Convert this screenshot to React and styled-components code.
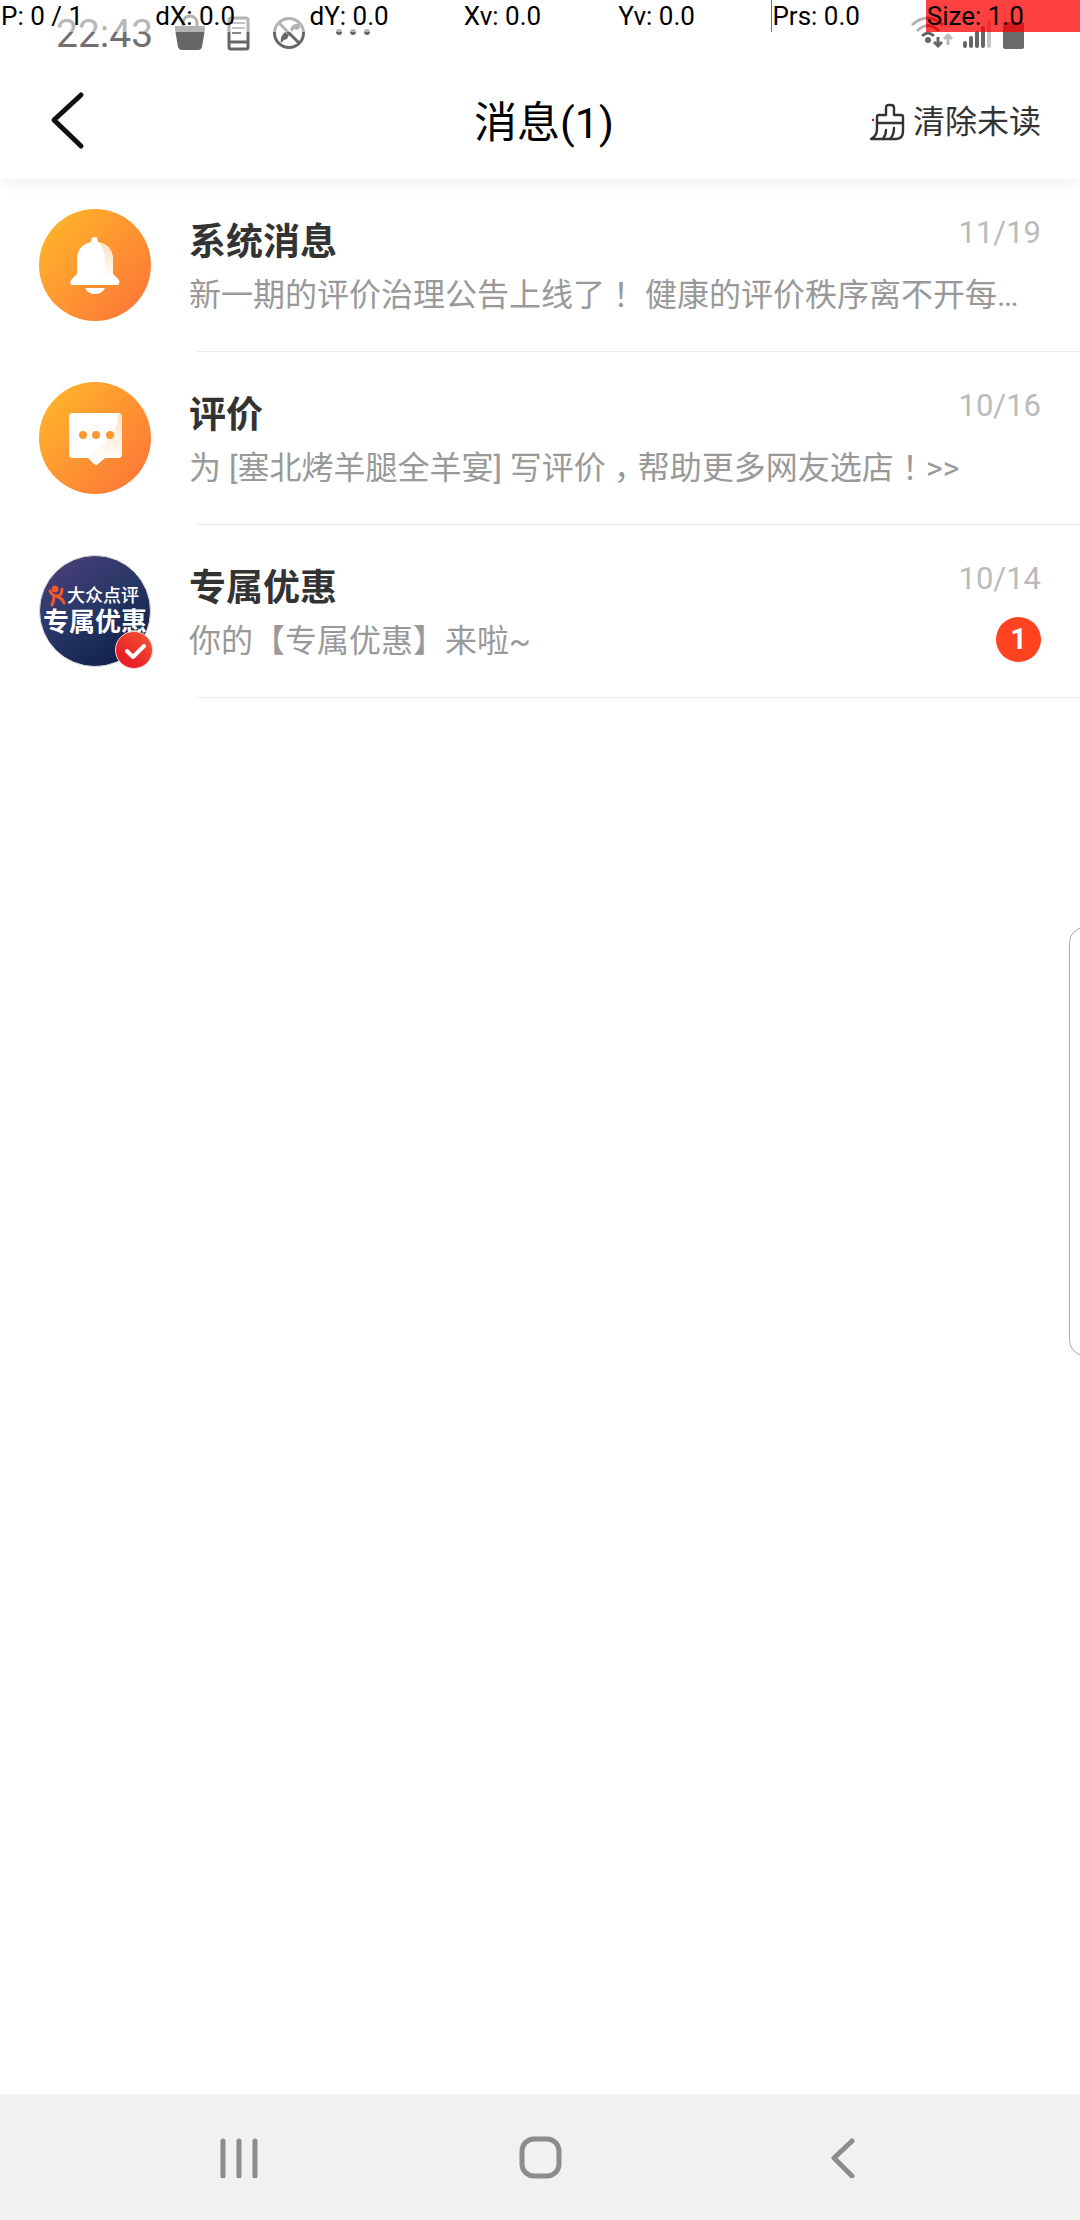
import React from "react";
import styled, { createGlobalStyle } from "styled-components";

const GlobalStyle = createGlobalStyle`
  * { box-sizing: border-box; }
  body {
    margin: 0;
    background: #fff;
    font-family: Roboto, "Noto Sans CJK SC", sans-serif;
  }
  button { font: inherit; color: inherit; background: none; border: 0; padding: 0; cursor: pointer; }
  svg { display: block; }
`;

const Screen = styled.div`
  position: relative;
  min-height: 100vh;
  display: flex;
  flex-direction: column;
  overflow: hidden;
`;

const StatusBar = styled.div`
  height: 64px;
  padding: 3px 56px 0 56px;
  display: flex;
  justify-content: space-between;
  align-items: center;
  color: #707070;
`;

const StatusGroup = styled.div`
  display: flex;
  align-items: center;
`;

const Clock = styled.time`
  width: 118px;
  font-size: 39px;
  line-height: 44px;
`;

const PointerOverlay = styled.div`
  position: absolute;
  z-index: 5;
  top: 0;
  left: 0;
  right: 0;
  height: 32px;
  display: grid;
  grid-template-columns: repeat(7, 1fr);
`;

const PointerCell = styled.span`
  height: 32px;
  font-size: 26px;
  line-height: 32px;
  color: #000;
  white-space: nowrap;
  background: ${(p) => (p.$full ? "rgba(255, 0, 0, 0.75)" : "rgba(255, 255, 255, 0.5)")};
  border-left: 1px solid ${(p) => (p.$marked ? "#f04040" : "transparent")};
`;

const Header = styled.header`
  height: 115px;
  padding: 0 39px 0 47px;
  display: grid;
  grid-template-columns: 1fr auto 1fr;
  align-items: center;
  background: #fff;
  box-shadow: 0 8px 12px -2px rgba(0, 0, 0, 0.05);
`;

const BackButton = styled.button`
  justify-self: start;
  width: 48px;
  height: 72px;
`;

const Title = styled.h1`
  margin: 0;
  padding-top: 2px;
  font-size: 43px;
  line-height: 60px;
  font-weight: 400;
  color: #000;
`;

const ClearButton = styled.button`
  justify-self: end;
  display: flex;
  align-items: center;
  gap: 8px;
  && { font-size: 32px; line-height: 48px; color: #333; }
`;

const List = styled.ul`
  flex: 1;
  margin: 0;
  padding: 0;
  list-style: none;
`;

const Row = styled.li`
  display: flex;
  gap: 38px;
  padding-left: 39px;
`;

const Avatar = styled.div`
  flex: none;
  width: 112px;
  height: 112px;
  margin-top: 30px;
`;

const Content = styled.div`
  flex: 1;
  min-width: 0;
  height: 173px;
  padding: 32px 39px 0 0;
  background: linear-gradient(#ebebeb, #ebebeb) 8px 100% / 100% 1px no-repeat;
`;

const Line = styled.div`
  display: flex;
  justify-content: space-between;
  align-items: flex-start;
`;

const Name = styled.h2`
  margin: 0;
  padding-top: 4px;
  font-size: 37px;
  line-height: 56px;
  font-weight: 700;
  color: #333;
`;

const DateText = styled.time`
  font-size: 31px;
  line-height: 44px;
  color: #bbb;
`;

const Preview = styled.p`
  margin: 0;
  font-size: 32px;
  line-height: 48px;
  color: #999;
  white-space: nowrap;
`;

const Exclamation = styled.span`
  font-family: "Noto Sans CJK TC", sans-serif;
  line-height: 1;
`;

const Comma = styled.span`
  display: inline-block;
  width: 1em;
  line-height: 1;
  text-indent: 8px;
`;

const Unread = styled.span`
  width: 45px;
  height: 45px;
  border-radius: 50%;
  background: #ff4220;
  color: #fff;
  font-size: 29px;
  line-height: 45px;
  font-weight: 700;
  text-align: center;
`;

const EdgePanel = styled.div`
  position: absolute;
  top: 927px;
  right: -20px;
  width: 31px;
  height: 429px;
  border: 1px solid #aaa;
  border-radius: 16px;
`;

const NavBar = styled.nav`
  height: 126px;
  padding: 0 88px;
  display: grid;
  grid-template-columns: repeat(3, 1fr);
  background: #f1f1f1;
`;

const NavButton = styled.button`
  display: flex;
  align-items: center;
  justify-content: center;
`;

function StatusIcons() {
  return (
    <svg width="200" height="40" viewBox="0 0 200 40" fill="none" aria-hidden="true">
      <path d="M1 12h30v3l-3 18q-1 3-4 3H8q-3 0-4-3L1 15z" fill="#666" />
      <path d="M9 12V9a7 7 0 0 1 14 0v3" stroke="#666" strokeWidth="3" />
      <rect x="55" y="4" width="19" height="31" rx="2" stroke="#666" strokeWidth="3" />
      <path d="M58 9h13M58 14h13M58 19h9" stroke="#888" strokeWidth="2" />
      <path d="M55 28h19" stroke="#666" strokeWidth="3" />
      <circle cx="115" cy="19" r="14.5" stroke="#666" strokeWidth="3" />
      <path d="M105 9l20 20" stroke="#666" strokeWidth="3" />
      <path d="M107 29c-1-5 1-8 4-11l4 3-2 4-3 1zM116 15c2-4 5-6 9-5l1 4-3 2-3-1-2 3z" fill="#666" />
      <circle cx="165" cy="18" r="3" fill="#666" />
      <circle cx="179" cy="18" r="3" fill="#666" />
      <circle cx="193" cy="18" r="3" fill="#666" />
    </svg>
  );
}

function SignalIcons() {
  return (
    <svg width="114" height="40" viewBox="0 0 114 40" fill="none" aria-hidden="true">
      <path d="M2 11Q17-3 33 11" stroke="#666" strokeWidth="3" />
      <path d="M7 17Q18 6 29 17" stroke="#666" strokeWidth="3" />
      <path d="M12 22Q18 16 24 22" stroke="#666" strokeWidth="3" />
      <circle cx="18" cy="26" r="3" fill="#666" />
      <path d="M28 23v9M24 28l4 4 4-4" stroke="#666" strokeWidth="3" />
      <path d="M38 31V21M34 25l4-4 4 4" stroke="#bbb" strokeWidth="3" />
      <path d="M55 32v-3M61 32v-8M67 32V19M73 32V14" stroke="#666" strokeWidth="4" strokeLinecap="round" />
      <path d="M79 32V8" stroke="#c4c4c4" strokeWidth="4" strokeLinecap="round" />
      <rect x="93" y="8" width="21" height="27" rx="2" fill="#6a6a6a" />
    </svg>
  );
}

function BrushIcon() {
  return (
    <svg width="36" height="38" viewBox="0 0 36 38" fill="none" stroke="#333" strokeWidth="2.4" strokeLinejoin="round" strokeLinecap="round" aria-hidden="true">
      <path d="M8 20v-6q0-2 2-2h7V5q0-3 3-3h2q3 0 3 3v7h7q2 0 2 2v14q0 8-7 8H2q6-3 6-10z" />
      <path d="M8 20h26M17 27q0 5-3 9M25 25q0 7-4 11" />
      <rect x="3" y="16" width="2" height="2" fill="#e00" stroke="none" />
    </svg>
  );
}

function BellAvatar() {
  return (
    <svg width="112" height="112" viewBox="0 0 112 112" aria-hidden="true">
      <defs>
        <linearGradient id="orange" x1="0.1" y1="0.15" x2="0.9" y2="0.85">
          <stop offset="0" stopColor="#ffb12b" />
          <stop offset="1" stopColor="#fd7a37" />
        </linearGradient>
        <linearGradient id="bellShade" x1="0" y1="0" x2="0" y2="1">
          <stop offset="0" stopColor="#ffe0bd" />
          <stop offset="1" stopColor="#fff" />
        </linearGradient>
      </defs>
      <circle cx="56" cy="56" r="56" fill="url(#orange)" />
      <path d="M52 33q0-5 3.500-5t3.500 5q15 3 15 18v14l6 6q1 4-1 5H33q-3-1-1-5l6-6V51q0-15 14-18z" fill="#fff" />
      <path d="M60 34q14 3 14 17v14l4 5H65q1-5 1-18 0-12-6-18z" fill="url(#bellShade)" />
      <path d="M46 79h20q-3 6-10 6t-10-6z" fill="#fff" />
    </svg>
  );
}

function CommentAvatar() {
  return (
    <svg width="112" height="112" viewBox="0 0 112 112" aria-hidden="true">
      <defs>
        <linearGradient id="commentShade" x1="0" y1="0" x2="0" y2="1">
          <stop offset="0" stopColor="#ffe3c6" />
          <stop offset="1" stopColor="#fff" />
        </linearGradient>
      </defs>
      <circle cx="56" cy="56" r="56" fill="url(#orange)" />
      <path d="M34 31h45q4 0 4 4v37q0 4-4 4H66l-7 6q-2 2-4 0l-6-6H34q-4 0-4-4V35q0-4 4-4z" fill="#fff" />
      <path d="M79 32q4 0 4 4v36q0 3-4 3H66l-7 6q-2 2-4 0l-6-6q31-21 30-43z" fill="url(#commentShade)" />
      <circle cx="44" cy="53" r="4" fill="#fb9832" />
      <circle cx="57" cy="53" r="4" fill="#fb9832" />
      <circle cx="71" cy="53" r="4" fill="#fb9832" />
    </svg>
  );
}

function OfferAvatar() {
  return (
    <svg width="116" height="116" viewBox="0 0 116 116" role="img" aria-label="大众点评 专属优惠">
      <defs>
        <linearGradient id="navy" x1="0.1" y1="0.1" x2="0.7" y2="1">
          <stop offset="0" stopColor="#483f78" />
          <stop offset="0.5" stopColor="#263665" />
          <stop offset="1" stopColor="#10204a" />
        </linearGradient>
        <linearGradient id="red" x1="1" y1="0" x2="0.3" y2="0.8">
          <stop offset="0" stopColor="#f05a38" />
          <stop offset="1" stopColor="#ea1f25" />
        </linearGradient>
      </defs>
      <circle cx="56" cy="56" r="55.500" fill="url(#navy)" stroke="#ddd" strokeWidth="1" />
      <g fill="none" stroke="#f0582e" strokeWidth="3" strokeLinecap="round">
        <path d="M11 36q2 5 7 5t5-7M15 41q0 5-2 9M19 42q4 1 6 6" />
      </g>
      <circle cx="16" cy="34" r="3.500" fill="#f0582e" />
      <text x="28" y="47" fontSize="18" fontWeight="500" fill="#fff">大众点评</text>
      <text x="4" y="76" fontSize="26" fontWeight="700" fill="#fff">专属优惠</text>
      <circle cx="95" cy="95" r="18.500" fill="url(#red)" stroke="#f6d5d5" strokeWidth="1" />
      <path d="M88 96l6 6 11-11" fill="none" stroke="#fff" strokeWidth="4" strokeLinecap="round" strokeLinejoin="round" />
    </svg>
  );
}

const debugCells = [
  { text: "P: 0 / 1" },
  { text: "dX: 0.0" },
  { text: "dY: 0.0" },
  { text: "Xv: 0.0" },
  { text: "Yv: 0.0" },
  { text: "Prs: 0.0", marked: true },
  { text: "Size: 1.0", full: true },
];

const messages = [
  { name: "系统消息", date: "11/19", text: "新一期的评价治理公告上线了！ 健康的评价秩序离不开每…", icon: BellAvatar },
  { name: "评价", date: "10/16", text: "为 [塞北烤羊腿全羊宴] 写评价，帮助更多网友选店！>>", icon: CommentAvatar },
  { name: "专属优惠", date: "10/14", text: "你的【专属优惠】来啦~", icon: OfferAvatar, unread: 1 },
];

// Full-width commas and exclamation marks sit in the middle of their cell.
const withMarks = (text) =>
  text.split(/([，！])/).map((part, i) => {
    if (part === "，") return <Comma key={i}>{part}</Comma>;
    if (part === "！") return <Exclamation key={i} lang="zh-Hant">{part}</Exclamation>;
    return part;
  });

export default function App() {
  return (
    <Screen>
      <GlobalStyle />
      <PointerOverlay>
        {debugCells.map((c) => (
          <PointerCell key={c.text} $marked={c.marked} $full={c.full}>{c.text}</PointerCell>
        ))}
      </PointerOverlay>
      <StatusBar>
        <StatusGroup>
          <Clock>22:43</Clock>
          <StatusIcons />
        </StatusGroup>
        <SignalIcons />
      </StatusBar>
      <Header>
        <BackButton aria-label="返回">
          <svg width="48" height="72" viewBox="0 0 48 72" fill="none" stroke="#111" strokeWidth="5" strokeLinecap="round" strokeLinejoin="round">
            <path d="M34 9L7 34l27 26" />
          </svg>
        </BackButton>
        <Title>消息(1)</Title>
        <ClearButton>
          <BrushIcon />
          清除未读
        </ClearButton>
      </Header>
      <List>
        {messages.map(({ name, date, text, icon: Icon, unread }) => (
          <Row key={name}>
            <Avatar><Icon /></Avatar>
            <Content>
              <Line>
                <Name>{name}</Name>
                <DateText>{date}</DateText>
              </Line>
              <Line>
                <Preview>{withMarks(text)}</Preview>
                {unread && <Unread>{unread}</Unread>}
              </Line>
            </Content>
          </Row>
        ))}
      </List>
      <NavBar>
        <NavButton aria-label="最近任务">
          <svg width="42" height="42" viewBox="0 0 42 42" stroke="#8c8c8c" strokeWidth="5" strokeLinecap="round">
            <path d="M5 5v35M21 5v35M37 5v35" />
          </svg>
        </NavButton>
        <NavButton aria-label="主屏幕">
          <svg width="44" height="44" viewBox="0 0 44 44" fill="none" stroke="#8c8c8c" strokeWidth="5">
            <rect x="4" y="4" width="37" height="37" rx="12" />
          </svg>
        </NavButton>
        <NavButton aria-label="后退">
          <svg width="42" height="42" viewBox="0 0 42 42" fill="none" stroke="#8c8c8c" strokeWidth="5" strokeLinecap="round" strokeLinejoin="round">
            <path d="M32 5L14 22l18 18" />
          </svg>
        </NavButton>
      </NavBar>
      <EdgePanel />
    </Screen>
  );
}
